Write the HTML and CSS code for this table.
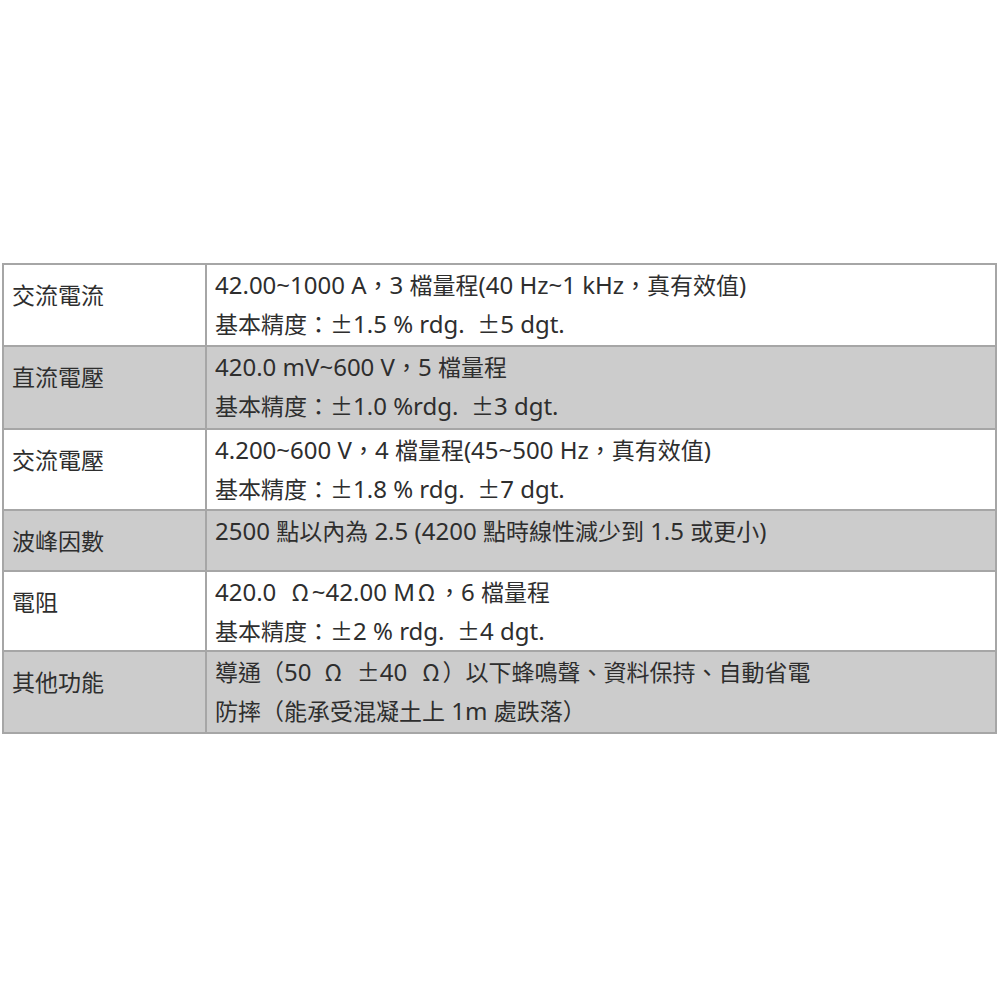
FILE: index.html
```html
<!DOCTYPE html>
<html lang="zh-Hant">
<head>
<meta charset="utf-8">
<title>規格</title>
<link rel="stylesheet" href="styles.css">
</head>
<body>
<div class="spec">
  <div class="label">交流電流</div>
  <div class="value">
    <p><span class="n">42.00~1000 A</span>，<span class="n">3 </span>檔量程<span class="n">(40 Hz~1 kHz</span>，真有效值<span class="n">)</span></p>
    <p>基本精度：±<span class="n">1.5 % rdg.  </span>±<span class="n">5 dgt.</span></p>
  </div>

  <div class="label gray">直流電壓</div>
  <div class="value gray">
    <p><span class="n">420.0 mV~600 V</span>，<span class="n">5 </span>檔量程</p>
    <p>基本精度：±<span class="n">1.0 %rdg.  </span>±<span class="n">3 dgt.</span></p>
  </div>

  <div class="label">交流電壓</div>
  <div class="value">
    <p><span class="n">4.200~600 V</span>，<span class="n">4 </span>檔量程<span class="n">(45~500 Hz</span>，真有效值<span class="n">)</span></p>
    <p>基本精度：±<span class="n">1.8 % rdg.  </span>±<span class="n">7 dgt.</span></p>
  </div>

  <div class="label gray">波峰因數</div>
  <div class="value gray">
    <p><span class="n">2500 </span>點以內為<span class="n"> 2.5 (4200 </span>點時線性減少到<span class="n"> 1.5 </span>或更小<span class="n">)</span></p>
  </div>

  <div class="label">電阻</div>
  <div class="value">
    <p><span class="n">420.0  </span><span class="om">Ω</span><span class="n">~42.00 M</span><span class="om">Ω</span>，<span class="n">6 </span>檔量程</p>
    <p>基本精度：±<span class="n">2 % rdg.  </span>±<span class="n">4 dgt.</span></p>
  </div>

  <div class="label gray">其他功能</div>
  <div class="value gray">
    <p>導通（<span class="n">50 </span><span class="om first">Ω</span> ±<span class="n">40 </span><span class="om second">Ω</span>）以下蜂鳴聲、資料保持、自動省電</p>
    <p>防摔（能承受混凝土上<span class="n"> 1m </span>處跌落）</p>
  </div>
</div>
</body>
</html>
```
FILE: styles.css
```css
html, body {
  margin: 0;
  padding: 0;
  background: #ffffff;
}

body {
  font-family: "Noto Sans CJK TC", "Noto Sans", sans-serif;
  font-size: 23px;
  color: #2e2e2e;
}

.spec {
  display: grid;
  grid-template-columns: 203px 790px;
  grid-template-rows: 82px 83px 81px 61px 80px 82px;
  margin: 263px 0 0 2px;
  border-top: 2px solid #a6a6a6;
  border-left: 2px solid #a6a6a6;
  width: 993px;
}

.label,
.value {
  box-sizing: border-box;
  border-right: 2px solid #a6a6a6;
  border-bottom: 2px solid #a6a6a6;
  padding-left: 8px;
  line-height: 39px;
}

.label {
  padding-top: 10px;
}

.value p {
  margin: 0;
  white-space: pre;
}

/* Latin runs: set a touch larger than the CJK glyphs, as in the source */
.n {
  font-family: "Noto Sans", sans-serif;
  font-size: 24px;
  line-height: 1;
}

.om {
  display: inline-block;
  width: 1em;
  text-align: center;
  line-height: 1;
}

.om.first {
  margin: 0 7px 0 4px;
}

.om.second {
  margin-left: 6px;
}

.gray {
  background: #cccccc;
}
```
